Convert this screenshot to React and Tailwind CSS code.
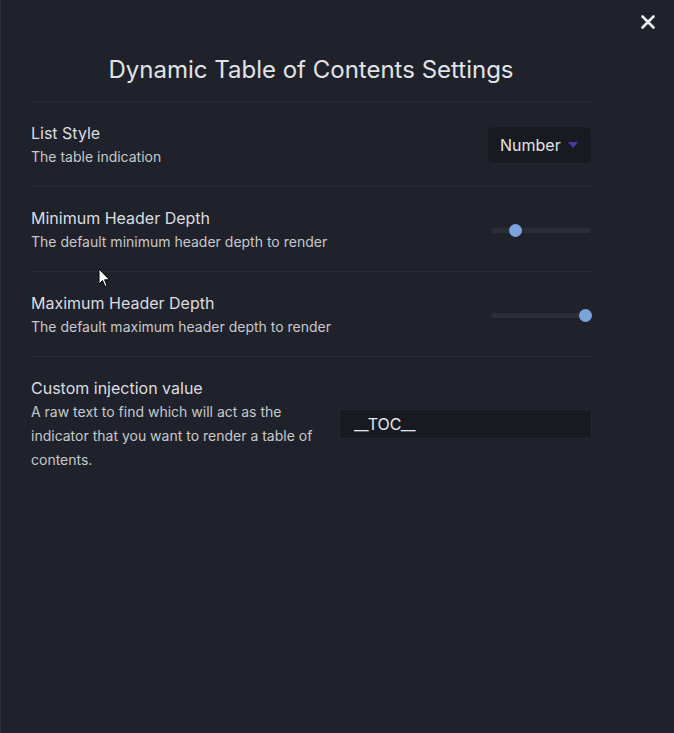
import React from "react";

function Slider({ pos }) {
  return (
    <div className="relative w-[100px] h-[14px] flex items-center">
      <div className="w-full h-[5px] rounded-full bg-[#2a2e37]" />
      <div
        className="absolute w-[13px] h-[13px] rounded-full bg-[#7ba3dc]"
        style={{ left: pos - 6.5 }}
      />
    </div>
  );
}

function Row({ label, desc, children }) {
  return (
    <div className="flex items-center border-t border-[#282c34] pt-[19px] pb-[17px]">
      <div className="flex-1">
        <div className="text-[16px] leading-[24px] text-[#dcdde0]">{label}</div>
        <div className="text-[14px] leading-[24px] text-[#c7c9cd]">{desc}</div>
      </div>
      {children}
    </div>
  );
}

export default function App() {
  return (
    <div
      className="relative w-[674px] h-[733px] bg-[#1f222a] border-l border-[#2c3038] overflow-hidden"
      style={{ fontFamily: "Inter, 'Noto Sans', sans-serif" }}
    >
      <button className="absolute left-[638px] top-[13px] w-[17px] h-[17px] flex items-center justify-center">
        <svg width="16" height="16" viewBox="0 0 16 16">
          <path d="M2.5 2.5 L13.5 13.5 M13.5 2.5 L2.5 13.5" stroke="#eef0f3" strokeWidth="2.6" strokeLinecap="round" />
        </svg>
      </button>

      <div className="ml-[30px] w-[561px] pt-[54px]">
        <h2 className="text-center text-[24px] leading-[32px] text-[#e2e3e6] mb-[15px] pr-[1px]">
          Dynamic Table of Contents Settings
        </h2>

        <Row label="List Style" desc="The table indication">
          <div className="h-[38px] w-[105px] rounded-md bg-[#171a20] border border-[#20242b] flex items-center pl-[12px] pr-[13px] justify-between">
            <span className="text-[16px] text-[#e3e4e7]">Number</span>
            <svg width="10" height="6" viewBox="0 0 10 6">
              <path d="M0 0 H10 L5 6 Z" fill="#4c3aa0" />
            </svg>
          </div>
        </Row>

        <Row label="Minimum Header Depth" desc="The default minimum header depth to render">
          <div className="mr-[1px]">
            <Slider pos={24} />
          </div>
        </Row>

        <Row label="Maximum Header Depth" desc="The default maximum header depth to render">
          <div className="mr-[1px]">
            <Slider pos={94} />
          </div>
        </Row>

        <div className="flex items-center border-t border-[#282c34] pt-[19px] pb-[17px]">
          <div className="w-[292px]">
            <div className="text-[16px] leading-[24px] text-[#dcdde0]">Custom injection value</div>
            <div className="text-[14px] leading-[24px] text-[#c7c9cd]">
              A raw text to find which will act as the indicator that you want to render a table of contents.
            </div>
          </div>
          <div className="ml-auto w-[253px] h-[30px] rounded-[3px] bg-[#171a20] border border-[#23272e] flex items-center pl-[14px]">
            <span className="text-[16px] text-[#e8e9ec]">__TOC__</span>
          </div>
        </div>
      </div>

      <svg className="absolute left-[97px] top-[268px]" width="13" height="21" viewBox="0 0 13 21">
        <path d="M1 1 L1 16 L4.5 12.5 L7 18.5 L9 17.6 L6.6 11.8 L11.5 11.8 Z" fill="#ffffff" stroke="#000000" strokeWidth="1" strokeLinejoin="round" />
      </svg>
    </div>
  );
}
